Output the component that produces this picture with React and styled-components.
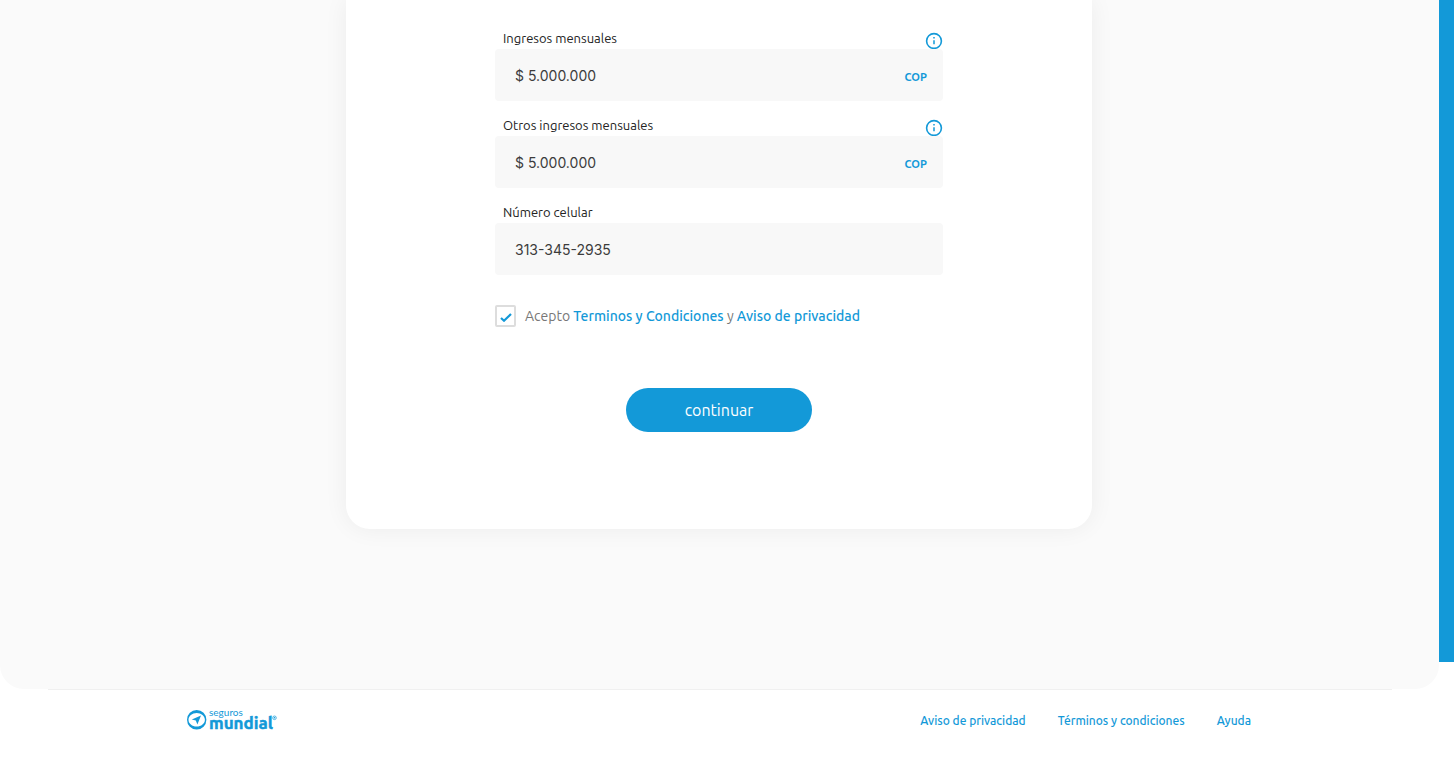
import React, { useState } from "react";
import styled, { createGlobalStyle } from "styled-components";

const blue = "#1399d8";
const uiFont = `Ubuntu, "Noto Sans", "Open Sans", sans-serif`;

const GlobalStyle = createGlobalStyle`
  *, *::before, *::after { box-sizing: border-box; }
  body { margin: 0; background: #fff; font-family: ${uiFont}; color: #333; }
`;

const Page = styled.div`
  display: grid;
  grid-template-columns: minmax(0, 1fr) 15px;
  min-height: 100vh;
`;

const Rail = styled.div`
  height: 87vh;
  background: ${blue};
`;

const Content = styled.div`
  display: flex;
  flex-direction: column;
`;

const Main = styled.main`
  display: flex;
  justify-content: center;
  padding: 0 1px 160px 0;
  background: #fafafa;
  border-radius: 0 0 24px 24px;
`;

const Card = styled.section`
  width: 100%;
  max-width: 746px;
  padding: 30px 24px 97px;
  background: #fff;
  border-radius: 0 0 24px 24px;
  box-shadow: 0 0 24px rgba(0, 0, 0, 0.06);
`;

const Form = styled.form`
  display: flex;
  flex-direction: column;
  gap: 16px;
  max-width: 448px;
  margin: 0 auto;
`;

const Field = styled.div`
  display: flex;
  flex-direction: column;
`;

const FieldHead = styled.div`
  display: flex;
  justify-content: space-between;
  height: 19px;
  padding-left: 8px;
`;

const Label = styled.label`
  font-size: 13px;
  line-height: 17px;
  color: #222;
`;

const InfoButton = styled.button`
  align-self: flex-end;
  display: flex;
  padding: 0;
  border: 0;
  background: none;
  color: ${blue};
  cursor: pointer;
`;

const InputBox = styled.div`
  display: flex;
  align-items: center;
  height: 52px;
  padding: 0 16px 0 20px;
  background: #f8f8f8;
  border-radius: 4px;
`;

const Input = styled.input`
  flex: 1;
  min-width: 0;
  height: 48px;
  padding: 0;
  border: 0;
  outline: 0;
  background: transparent;
  font-family: Inter, sans-serif;
  font-size: 14px;
  color: #3c3c3c;
`;

const Currency = styled.span`
  padding-top: 4px;
  font-size: 11px;
  font-weight: 700;
  color: ${blue};
`;

const Consent = styled.div`
  display: flex;
  align-items: center;
  gap: 9px;
  margin-top: 14px;
  height: 22px;
  font-size: 14px;
  line-height: 22px;
  color: #777;
  white-space: nowrap;
`;

const Tick = styled.span`
  display: grid;
  flex: none;

  input, svg { grid-area: 1 / 1; }
  input {
    appearance: none;
    width: 21px;
    height: 22px;
    margin: 0;
    border: 2px solid #ddd;
    border-radius: 2px;
    background: #fff;
  }
  svg { place-self: center; pointer-events: none; visibility: hidden; }
  input:checked + svg { visibility: visible; }
`;

const Link = styled.a`
  color: ${blue};
  font-weight: 500;
  text-decoration: none;
`;

const Submit = styled.button`
  align-self: center;
  width: 186px;
  height: 44px;
  margin-top: 45px;
  padding: 0;
  border: 0;
  border-radius: 22px;
  background: ${blue};
  color: #fff;
  font-family: inherit;
  font-size: 16px;
  cursor: pointer;
`;

const Divider = styled.hr`
  width: calc(100% - 95px);
  height: 1px;
  margin: 0 auto;
  border: 0;
  background: #f0f0f0;
`;

const Footer = styled.footer`
  display: flex;
  align-items: center;
  justify-content: space-between;
  width: 100%;
  max-width: 1065px;
  height: 61px;
  margin: 0 auto;
`;

const FooterNav = styled.nav`
  display: flex;
  gap: 32px;
  padding-right: 1px;
  font-size: 12px;
  line-height: 20px;
`;

function InfoIcon() {
  return (
    <svg width="18" height="17" viewBox="0 0 18 17" fill="none" aria-hidden="true">
      <circle cx="9" cy="9" r="7.4" stroke="currentColor" strokeWidth="1.6" />
      <path d="M9 8.2v4M9 5v1.6" stroke="currentColor" strokeWidth="1.5" />
    </svg>
  );
}

function Logo() {
  return (
    <svg width="92" height="30" viewBox="0 -3 92 30" fill={blue} role="img" aria-label="seguros mundial">
      <path
        fillRule="evenodd"
        d="M9.7 1A9.7 9.8 0 1 1 9.7 20.6A9.7 9.8 0 1 1 9.7 1ZM9.7 4C5.2 4 1.5 7 1.5 10.8S5.2 17.6 9.7 17.6S17.9 14.6 17.9 10.8S14.2 4 9.7 4Z"
      />
      <path d="M14 6.4 4.8 10.4 8.8 11.6 10.4 15.6Z" />
      <text x="22" y="7" fontFamily="Lato, sans-serif" fontSize="10" fontWeight="400">seguros</text>
      <text x="22" y="20" fontFamily="Ubuntu, 'Noto Sans', sans-serif" fontSize="17" fontWeight="700" stroke={blue} strokeWidth="0.5">mundial</text>
      <circle cx="87.5" cy="8.8" r="1.8" fill="none" stroke={blue} strokeWidth="0.7" />
      <circle cx="87.5" cy="8.8" r="0.8" />
    </svg>
  );
}

function TextField({ id, label, value, currency }) {
  const [text, setText] = useState(value);
  return (
    <Field>
      <FieldHead>
        <Label htmlFor={id}>{label}</Label>
        {currency && (
          <InfoButton type="button" aria-label={`Información: ${label}`}>
            <InfoIcon />
          </InfoButton>
        )}
      </FieldHead>
      <InputBox>
        <Input id={id} value={text} onChange={(e) => setText(e.target.value)} />
        {currency && <Currency>{currency}</Currency>}
      </InputBox>
    </Field>
  );
}

export default function App() {
  return (
    <>
      <GlobalStyle />
      <Page>
        <Content>
          <Main>
            <Card>
              <Form onSubmit={(e) => e.preventDefault()}>
                <TextField id="income" label="Ingresos mensuales" value="$ 5.000.000" currency="COP" />
                <TextField id="other-income" label="Otros ingresos mensuales" value="$ 5.000.000" currency="COP" />
                <TextField id="phone" label="Número celular" value="313-345-2935" />
                <Consent>
                  <Tick>
                    <input id="consent" type="checkbox" defaultChecked />
                    <svg width="13" height="12" viewBox="0 -2 13 12" fill="none" aria-hidden="true">
                      <path d="M2 6 5 8.7 12 2" stroke={blue} strokeWidth="2.2" />
                    </svg>
                  </Tick>
                  <label htmlFor="consent">
                    Acepto <Link href="#terminos">Terminos y Condiciones</Link> y{" "}
                    <Link href="#privacidad">Aviso de privacidad</Link>
                  </label>
                </Consent>
                <Submit type="submit">continuar</Submit>
              </Form>
            </Card>
          </Main>
          <Divider />
          <Footer>
            <Logo />
            <FooterNav>
              <Link href="#privacidad">Aviso de privacidad</Link>
              <Link href="#terminos">Términos y condiciones</Link>
              <Link href="#ayuda">Ayuda</Link>
            </FooterNav>
          </Footer>
        </Content>
        <Rail />
      </Page>
    </>
  );
}
